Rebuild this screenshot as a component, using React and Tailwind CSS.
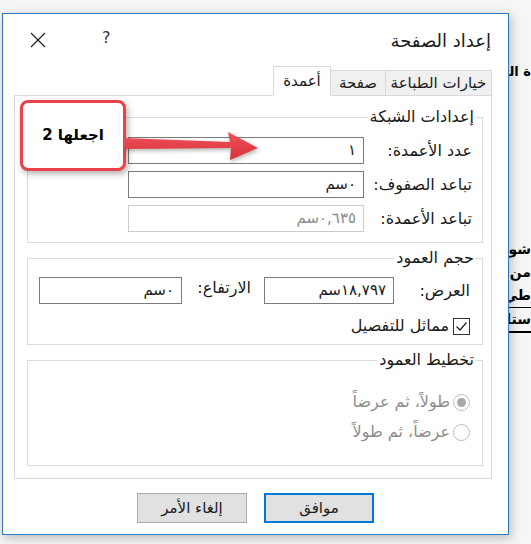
import React from 'react'

const FONT = { fontFamily: '"DejaVu Sans", "Noto Sans", sans-serif' }

function Field({ value, width, disabled }) {
  return (
    <div
      className={`h-[27px] flex items-center justify-start pr-[7px] border bg-white text-[15px] ${
        disabled ? 'border-[#cccccc] text-[#8a8a8a]' : 'border-[#7a7a7a] text-[#1a1a1a]'
      }`}
      style={{ width }}
    >
      {value}
    </div>
  )
}

function Group({ title, className, children }) {
  return (
    <div className={`relative border border-[#dcdcdc] ml-[12px] mr-[8px] ${className}`}>
      <span className="absolute -top-[12px] right-[6px] bg-white px-[2px] text-[16px] leading-[22px] text-[#1a1a1a]">
        {title}
      </span>
      {children}
    </div>
  )
}

function Radio({ checked, label }) {
  return (
    <div className="h-[22px] flex items-center gap-[3px]">
      <span className="w-[17px] h-[17px] rounded-full border border-[#bcbcbc] bg-white flex items-center justify-center">
        {checked && <span className="w-[9px] h-[9px] rounded-full bg-[#a8a8a8]" />}
      </span>
      <span className="text-[16px] text-[#8d8d8d]">{label}</span>
    </div>
  )
}

export default function App() {
  return (
    <div className="relative w-[531px] h-[544px] overflow-hidden bg-[#f6f6f6]" style={FONT}>
      {/* document behind the dialog */}
      <div dir="rtl" className="absolute right-0 top-[62px] text-[13px] font-bold text-black whitespace-nowrap">
        ة المستند
      </div>
      <div dir="rtl" className="absolute right-0 top-[238px] w-[34px] flex flex-col items-start text-[14px] font-bold leading-[23px] text-black">
        <span className="whitespace-nowrap">شور</span>
        <span className="whitespace-nowrap">من</span>
        <span className="whitespace-nowrap border-b border-black w-full">طي</span>
        <span className="whitespace-nowrap border-b-2 border-black w-full">ستار</span>
      </div>

      {/* dialog */}
      <div
        dir="rtl"
        className="absolute left-[2px] top-[13px] w-[507px] h-[522px] bg-white border border-[#2b7bc4] shadow-[2px_3px_10px_rgba(0,0,0,0.25)] flex flex-col"
      >
        {/* title bar */}
        <div className="h-[52px] flex items-center justify-between">
          <span className="pr-[17px] text-[18px] text-[#1a1a1a]">إعداد الصفحة</span>
          <div dir="ltr" className="flex items-center pl-[27px] gap-[56px]">
            <svg width="16" height="16" viewBox="0 0 16 16" className="text-[#222]">
              <path d="M1 1 L15 15 M15 1 L1 15" stroke="currentColor" strokeWidth="1.2" fill="none" />
            </svg>
            <span className="text-[16px] text-[#333] -mt-[4px]">?</span>
          </div>
        </div>

        {/* tabs */}
        <div className="relative z-10 flex items-end h-[30px] mr-[16px] -mb-px">
          <div className="w-[107px] h-[26px] flex items-center justify-center bg-[#f0f0f0] border border-[#d9d9d9] text-[15px] text-[#1a1a1a]">
            خيارات الطباعة
          </div>
          <div className="w-[56px] h-[26px] -mr-px flex items-center justify-center bg-[#f0f0f0] border border-[#d9d9d9] text-[15px] text-[#1a1a1a]">
            صفحة
          </div>
          <div className="w-[58px] h-[30px] -mr-px flex items-center justify-center bg-white border border-[#d9d9d9] border-b-white text-[15px] text-[#1a1a1a]">
            أعمدة
          </div>
        </div>

        {/* panel */}
        <div className="h-[384px] mr-[16px] ml-[11px] border border-[#d9d9d9] flex flex-col">
          <Group title="إعدادات الشبكة" className="mt-[21px] h-[126px] pt-[19px] pr-[10px] flex flex-col gap-[7px]">
            <div className="flex items-center">
              <span className="w-[108px] text-[16px] text-[#1a1a1a]">عدد الأعمدة:</span>
              <Field value="١" width={236} />
            </div>
            <div className="flex items-center">
              <span className="w-[108px] text-[16px] text-[#1a1a1a]">تباعد الصفوف:</span>
              <Field value="٠سم" width={236} />
            </div>
            <div className="flex items-center">
              <span className="w-[108px] text-[16px] text-[#1a1a1a]">تباعد الأعمدة:</span>
              <Field value="٠,٦٣٥سم" width={236} disabled />
            </div>
          </Group>

          <Group title="حجم العمود" className="mt-[15px] h-[87px] pt-[18px] pr-[12px]">
            <div className="flex items-start">
              <span className="w-[76px] h-[28px] flex items-center text-[16px] text-[#1a1a1a]">العرض:</span>
              <Field value="١٨,٧٩٧سم" width={130} />
              <span className="w-[82px] pr-[13px] h-[22px] flex items-center text-[16px] text-[#1a1a1a]">الارتفاع:</span>
              <Field value="٠سم" width={143} />
            </div>
            <div className="mt-[9px] flex items-center gap-[4px]">
              <span className="w-[17px] h-[17px] border border-[#333] bg-white flex items-center justify-center">
                <svg width="13" height="13" viewBox="0 0 13 13">
                  <path d="M1.5 6.5 L5 10 L11.5 2.5" stroke="#222" strokeWidth="1.2" fill="none" />
                </svg>
              </span>
              <span className="text-[16px] text-[#1a1a1a]">مماثل للتفصيل</span>
            </div>
          </Group>

          <Group title="تخطيط العمود" className="mt-[15px] h-[106px] pt-[30px] pr-[12px] flex flex-col gap-[8px]">
            <Radio checked label="طولاً،  ثم عرضاً" />
            <Radio label="عرضاً، ثم طولاً" />
          </Group>
        </div>

        {/* buttons */}
        <div className="mt-[14px] flex justify-center gap-[17px]">
          <button className="w-[110px] h-[30px] bg-[#e1e1e1] border-2 border-[#0078d7] text-[15px] text-[#1a1a1a]">
            موافق
          </button>
          <button className="w-[110px] h-[30px] bg-[#e1e1e1] border border-[#adadad] text-[15px] text-[#1a1a1a]">
            إلغاء الأمر
          </button>
        </div>
      </div>

      {/* callout */}
      <div className="absolute left-[20px] top-[100px] w-[106px] h-[71px] bg-white border-[3px] border-[#e8424a] rounded-[8px] shadow-[2px_3px_6px_rgba(0,0,0,0.3)] flex items-center justify-center">
        <span dir="rtl" className="text-[15px] font-bold text-black" style={{ fontFamily: '"DejaVu Sans", "Liberation Sans", sans-serif' }}>
          اجعلها 2
        </span>
      </div>
      <svg className="absolute left-[124px] top-[128px]" width="140" height="36" viewBox="0 0 140 36">
        <defs>
          <linearGradient id="arr" x1="0" y1="0" x2="0" y2="1">
            <stop offset="0" stopColor="#f0545b" />
            <stop offset="1" stopColor="#d92f38" />
          </linearGradient>
        </defs>
        <polygon
          points="0,10 106,14 104,4 134,20 106,32 107,20 0,21"
          fill="url(#arr)"
          style={{ filter: 'drop-shadow(1px 2px 2px rgba(0,0,0,0.3))' }}
        />
      </svg>
    </div>
  )
}
